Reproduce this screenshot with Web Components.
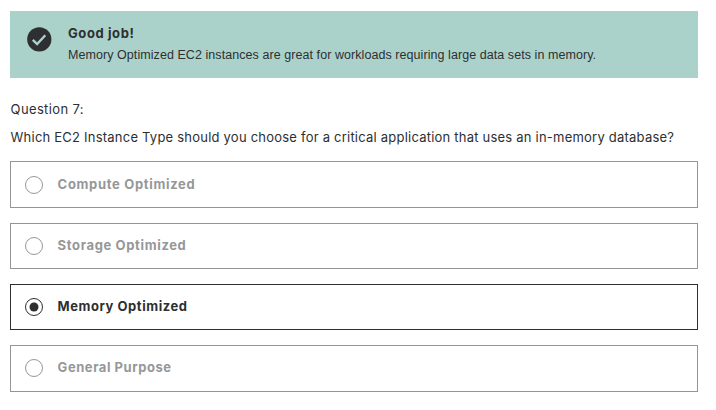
<!DOCTYPE html>
<html lang="en">
<head>
<meta charset="utf-8">
<title>Quiz</title>
<style>
body { margin: 0; background: #fff; color: #2d2f31; font-family: Inter, "Liberation Sans", sans-serif; }
</style>
</head>
<body>
<quiz-page>
  <feedback-banner heading="Good job!">Memory Optimized EC2 instances are great for workloads requiring large data sets in memory.</feedback-banner>
  <quiz-question number="7">Which EC2 Instance Type should you choose for a critical application that uses an in-memory database?</quiz-question>
  <answer-list>
    <answer-option style="--h:47px;--top:13px;--ls:.68px">Compute Optimized</answer-option>
    <answer-option style="--ls:.65px">Storage Optimized</answer-option>
    <answer-option selected>Memory Optimized</answer-option>
    <answer-option style="--h:47px">General Purpose</answer-option>
  </answer-list>
</quiz-page>
<script>
const define = (name, html, init) => customElements.define(name, class extends HTMLElement {
  constructor() {
    super();
    this.attachShadow({ mode: "open" }).innerHTML = html;
  }
  connectedCallback() { if (init) init(this, this.shadowRoot); }
});

define("quiz-page", `
<style>:host { display: flex; flex-direction: column; width: 688px; padding: 11px 0 0 10px; }</style>
<slot></slot>`);

define("feedback-banner", `
<style>
:host { display: flex; height: 67px; background: #abd2ca; box-sizing: border-box; padding: 14px 0 0 17px; gap: 16px; }
svg { width: 25px; height: 25px; margin-top: 2px; flex: none; }
h2 { margin: 0; font-weight: 700; font-size: 13px; line-height: 17px; letter-spacing: .6px; }
p { margin: 4px 0 0; font-family: "Liberation Sans", sans-serif; font-size: 12.5px; line-height: 18px; letter-spacing: .065px; white-space: nowrap; }
</style>
<svg viewBox="0 0 25 25"><circle cx="12.3" cy="12.4" r="12.1" fill="#2d2f31"/><path d="M5.8 12.9l4.3 4.1 8.2-8.8" fill="none" stroke="#abd2ca" stroke-width="2.4"/></svg>
<div><h2></h2><p><slot></slot></p></div>`,
(el, root) => { root.querySelector("h2").textContent = el.getAttribute("heading"); });

define("quiz-question", `
<style>
:host { display: block; padding: 17px 0 0 .6px; height: 66px; }
div { font-size: 13px; line-height: 28px; letter-spacing: .22px; white-space: nowrap; }
.n { letter-spacing: .36px; }
</style>
<div class="n"></div><div><slot></slot></div>`,
(el, root) => { root.querySelector(".n").textContent = "Question " + el.getAttribute("number") + ":"; });

define("answer-list", `
<style>:host { display: flex; flex-direction: column; gap: 15px; }</style>
<slot></slot>`);

define("answer-option", `
<style>
:host { display: flex; align-items: flex-start; box-sizing: border-box; height: var(--h, 46px); border: 1px solid #959596; color: #969798; padding: var(--top, 12px) 0 0 13px; gap: 13.6px; }
:host([selected]) { border-color: #2d2f31; color: #2d2f31; }
svg { width: 20px; height: 20px; flex: none; }
.dot { display: none; }
:host([selected]) .dot { display: block; }
span { font-weight: 700; font-size: 13px; line-height: 18px; letter-spacing: var(--ls, .55px); white-space: nowrap; }
</style>
<svg viewBox="0 0 20 20"><circle cx="10" cy="10" r="8.5" fill="none" stroke="currentColor"/><circle class="dot" cx="10" cy="10" r="4.5" fill="currentColor"/></svg>
<span><slot></slot></span>`);
</script>
</body>
</html>
